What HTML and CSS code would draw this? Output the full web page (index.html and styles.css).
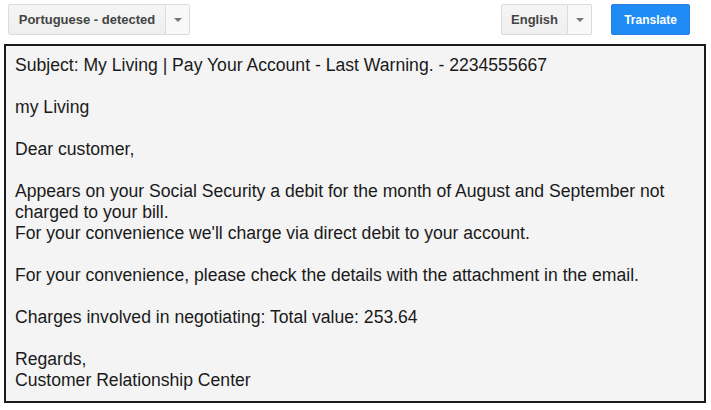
FILE: index.html
```html
<!DOCTYPE html>
<html>
<head>
<meta charset="utf-8">
<link rel="stylesheet" href="styles.css">
</head>
<body>
<div class="page">
  <div class="toolbar">
    <div class="lang-group">
      <div class="lang-btn lang-main src">Portuguese - detected</div>
      <div class="lang-btn lang-drop"><span class="caret"></span></div>
    </div>
    <div class="right-group">
      <div class="lang-group">
        <div class="lang-btn lang-main dst">English</div>
        <div class="lang-btn lang-drop"><span class="caret"></span></div>
      </div>
      <div class="translate-btn">Translate</div>
    </div>
  </div>
  <div class="text-box">
    <p>Subject: My Living | Pay Your Account - Last Warning. - 2234555667</p>
    <p>my Living</p>
    <p>Dear customer,</p>
    <p>Appears on your Social Security a debit for the month of August and September not<br>charged to your bill.<br>For your convenience we'll charge via direct debit to your account.</p>
    <p>For your convenience, please check the details with the attachment in the email.</p>
    <p>Charges involved in negotiating: Total value: 253.64</p>
    <p>Regards,<br>Customer Relationship Center</p>
  </div>
</div>
</body>
</html>
```
FILE: styles.css
```css
html, body {
  margin: 0;
  padding: 0;
  background: #ffffff;
}
.page {
  width: 711px;
  height: 410px;
  padding: 4px 5px 0 4px;
  box-sizing: border-box;
  font-family: Arial, "Liberation Sans", Helvetica, sans-serif;
}
.toolbar {
  display: flex;
  justify-content: space-between;
  align-items: center;
  height: 31px;
  padding: 0 16px 0 4px;
  margin-bottom: 9px;
}
.right-group {
  display: flex;
  align-items: center;
  gap: 19px;
}
.lang-group {
  display: flex;
  height: 31px;
}
.lang-btn {
  box-sizing: border-box;
  height: 31px;
  border: 1px solid #dcdcdc;
  background: linear-gradient(#f5f5f5, #efefef);
  display: flex;
  align-items: center;
  justify-content: center;
  color: #444444;
  font-size: 13px;
  font-weight: bold;
}
.lang-main {
  border-radius: 2px 0 0 2px;
}
.src {
  width: 158px;
}
.dst {
  width: 67px;
}
.lang-drop {
  width: 24px;
  border-left: none;
  background: #f8f8f8;
  border-radius: 0 2px 2px 0;
}
.caret {
  width: 0;
  height: 0;
  border-left: 4px solid transparent;
  border-right: 4px solid transparent;
  border-top: 4px solid #777777;
}
.translate-btn {
  box-sizing: border-box;
  width: 79px;
  height: 31px;
  background: #1f8cf5;
  border: 1px solid #2a7fe0;
  border-radius: 2px;
  color: #ffffff;
  font-size: 12px;
  font-weight: bold;
  display: flex;
  align-items: center;
  justify-content: center;
}
.text-box {
  box-sizing: border-box;
  width: 702px;
  height: 359px;
  border: 2px solid #1a1a1a;
  background: #f4f4f4;
  padding: 9px 9px 8px;
  color: #1a1a1a;
  font-size: 17.6px;
  line-height: 21px;
}
.text-box p {
  margin: 0 0 21px 0;
}
.text-box p:last-child {
  margin-bottom: 0;
}
```
